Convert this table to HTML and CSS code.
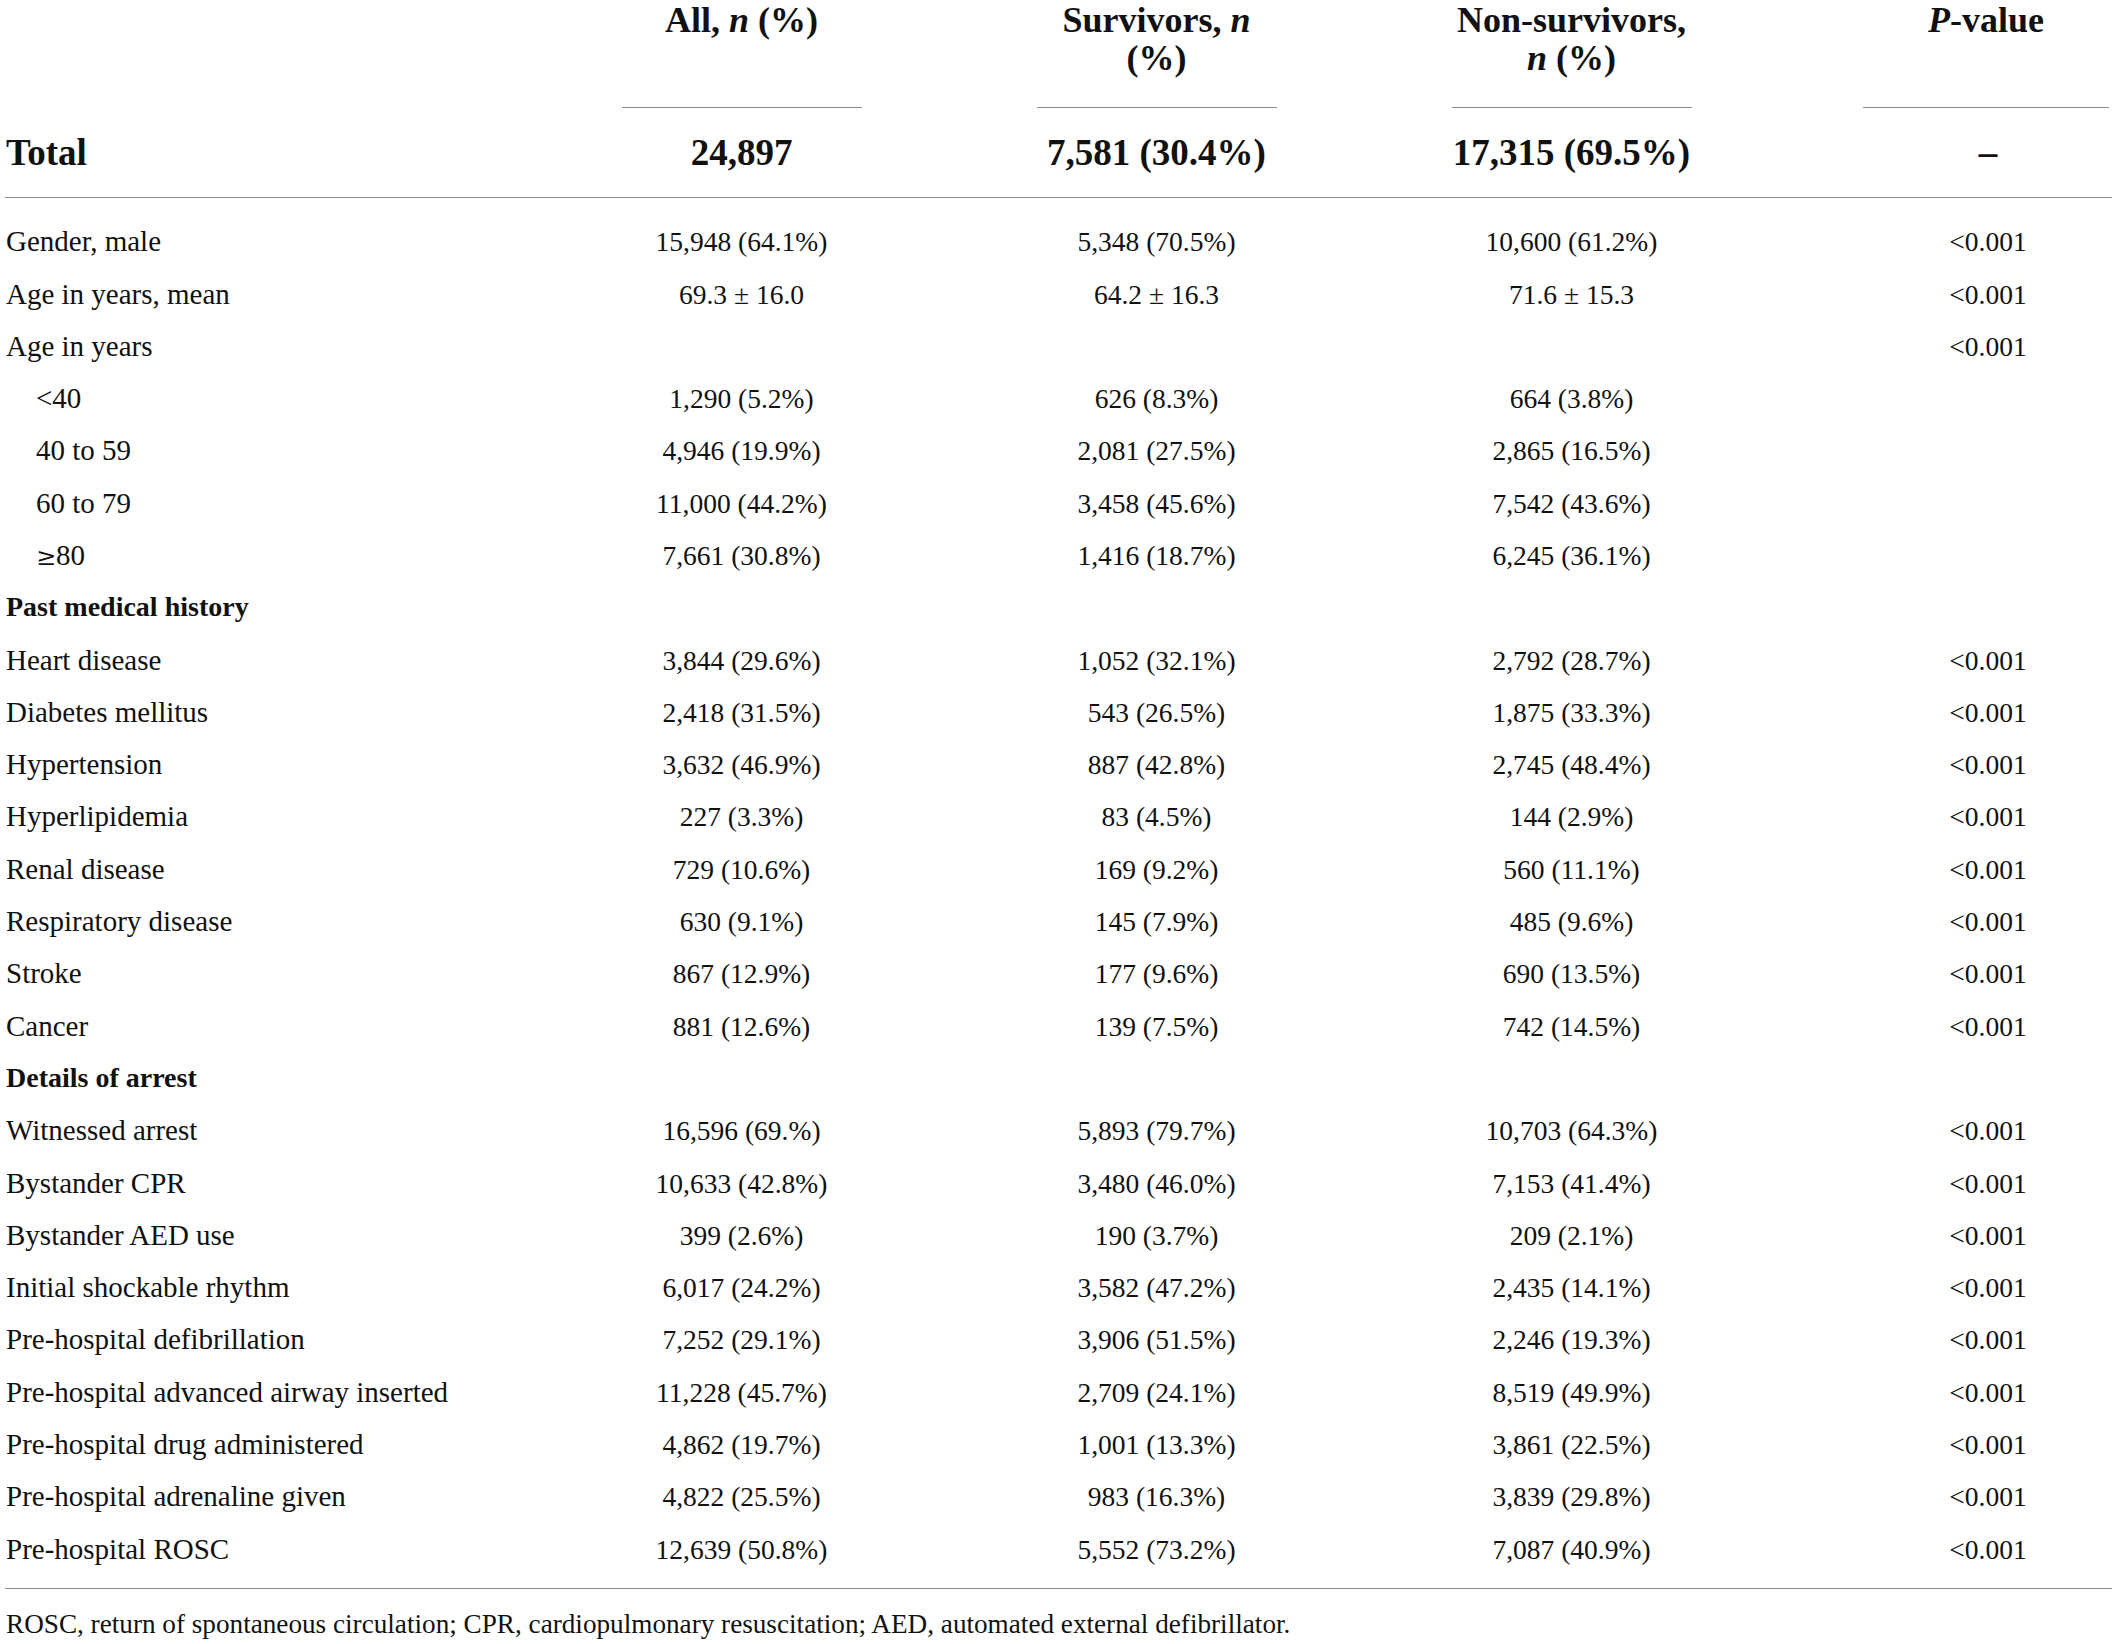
FILE: index.html
```html
<!DOCTYPE html>
<html lang="en">
<head>
<meta charset="utf-8">
<title>Characteristics table</title>
<link rel="stylesheet" href="styles.css">
</head>
<body>
<table class="tbl">
  <colgroup>
    <col class="c-label">
    <col class="c-data">
    <col class="c-data">
    <col class="c-data">
    <col class="c-p">
  </colgroup>
  <thead>
    <tr class="head">
      <th class="lab"></th>
      <th><div class="hd">All, <i>n</i> (%)</div></th>
      <th><div class="hd">Survivors, <i>n</i><br>(%)</div></th>
      <th><div class="hd">Non-survivors,<br><i>n</i> (%)</div></th>
      <th class="pcol"><div class="hd hd-p"><i>P</i>-value</div></th>
    </tr>
    <tr class="total">
      <th class="lab">Total</th>
      <th>24,897</th>
      <th>7,581 (30.4%)</th>
      <th>17,315 (69.5%)</th>
      <th class="pcol">–</th>
    </tr>
  </thead>
  <tbody>
    <tr class="first"><td class="lab">Gender, male</td><td>15,948 (64.1%)</td><td>5,348 (70.5%)</td><td>10,600 (61.2%)</td><td class="pcol">&lt;0.001</td></tr>
    <tr><td class="lab">Age in years, mean</td><td>69.3 ± 16.0</td><td>64.2 ± 16.3</td><td>71.6 ± 15.3</td><td class="pcol">&lt;0.001</td></tr>
    <tr><td class="lab">Age in years</td><td></td><td></td><td></td><td class="pcol">&lt;0.001</td></tr>
    <tr><td class="lab ind">&lt;40</td><td>1,290 (5.2%)</td><td>626 (8.3%)</td><td>664 (3.8%)</td><td class="pcol"></td></tr>
    <tr><td class="lab ind">40 to 59</td><td>4,946 (19.9%)</td><td>2,081 (27.5%)</td><td>2,865 (16.5%)</td><td class="pcol"></td></tr>
    <tr><td class="lab ind">60 to 79</td><td>11,000 (44.2%)</td><td>3,458 (45.6%)</td><td>7,542 (43.6%)</td><td class="pcol"></td></tr>
    <tr><td class="lab ind"><span class="ge">≥</span>80</td><td>7,661 (30.8%)</td><td>1,416 (18.7%)</td><td>6,245 (36.1%)</td><td class="pcol"></td></tr>
    <tr><td class="lab sec">Past medical history</td><td></td><td></td><td></td><td class="pcol"></td></tr>
    <tr><td class="lab">Heart disease</td><td>3,844 (29.6%)</td><td>1,052 (32.1%)</td><td>2,792 (28.7%)</td><td class="pcol">&lt;0.001</td></tr>
    <tr><td class="lab">Diabetes mellitus</td><td>2,418 (31.5%)</td><td>543 (26.5%)</td><td>1,875 (33.3%)</td><td class="pcol">&lt;0.001</td></tr>
    <tr><td class="lab">Hypertension</td><td>3,632 (46.9%)</td><td>887 (42.8%)</td><td>2,745 (48.4%)</td><td class="pcol">&lt;0.001</td></tr>
    <tr><td class="lab">Hyperlipidemia</td><td>227 (3.3%)</td><td>83 (4.5%)</td><td>144 (2.9%)</td><td class="pcol">&lt;0.001</td></tr>
    <tr><td class="lab">Renal disease</td><td>729 (10.6%)</td><td>169 (9.2%)</td><td>560 (11.1%)</td><td class="pcol">&lt;0.001</td></tr>
    <tr><td class="lab">Respiratory disease</td><td>630 (9.1%)</td><td>145 (7.9%)</td><td>485 (9.6%)</td><td class="pcol">&lt;0.001</td></tr>
    <tr><td class="lab">Stroke</td><td>867 (12.9%)</td><td>177 (9.6%)</td><td>690 (13.5%)</td><td class="pcol">&lt;0.001</td></tr>
    <tr><td class="lab">Cancer</td><td>881 (12.6%)</td><td>139 (7.5%)</td><td>742 (14.5%)</td><td class="pcol">&lt;0.001</td></tr>
    <tr><td class="lab sec">Details of arrest</td><td></td><td></td><td></td><td class="pcol"></td></tr>
    <tr><td class="lab">Witnessed arrest</td><td>16,596 (69.%)</td><td>5,893 (79.7%)</td><td>10,703 (64.3%)</td><td class="pcol">&lt;0.001</td></tr>
    <tr><td class="lab">Bystander CPR</td><td>10,633 (42.8%)</td><td>3,480 (46.0%)</td><td>7,153 (41.4%)</td><td class="pcol">&lt;0.001</td></tr>
    <tr><td class="lab">Bystander AED use</td><td>399 (2.6%)</td><td>190 (3.7%)</td><td>209 (2.1%)</td><td class="pcol">&lt;0.001</td></tr>
    <tr><td class="lab">Initial shockable rhythm</td><td>6,017 (24.2%)</td><td>3,582 (47.2%)</td><td>2,435 (14.1%)</td><td class="pcol">&lt;0.001</td></tr>
    <tr><td class="lab">Pre-hospital defibrillation</td><td>7,252 (29.1%)</td><td>3,906 (51.5%)</td><td>2,246 (19.3%)</td><td class="pcol">&lt;0.001</td></tr>
    <tr><td class="lab">Pre-hospital advanced airway inserted</td><td>11,228 (45.7%)</td><td>2,709 (24.1%)</td><td>8,519 (49.9%)</td><td class="pcol">&lt;0.001</td></tr>
    <tr><td class="lab">Pre-hospital drug administered</td><td>4,862 (19.7%)</td><td>1,001 (13.3%)</td><td>3,861 (22.5%)</td><td class="pcol">&lt;0.001</td></tr>
    <tr><td class="lab">Pre-hospital adrenaline given</td><td>4,822 (25.5%)</td><td>983 (16.3%)</td><td>3,839 (29.8%)</td><td class="pcol">&lt;0.001</td></tr>
    <tr class="last"><td class="lab">Pre-hospital ROSC</td><td>12,639 (50.8%)</td><td>5,552 (73.2%)</td><td>7,087 (40.9%)</td><td class="pcol">&lt;0.001</td></tr>
  </tbody>
</table>
<p class="note">ROSC, return of spontaneous circulation; CPR, cardiopulmonary resuscitation; AED, automated external defibrillator.</p>
</body>
</html>
```

FILE: styles.css
```css
html, body {
  margin: 0;
  padding: 0;
  background: #ffffff;
}

body {
  font-family: "Liberation Serif", "Times New Roman", serif;
  color: #111111;
}

.tbl {
  margin-left: 5px;
  width: 2107px;
  table-layout: fixed;
  border-collapse: separate;
  border-spacing: 0;
}

.c-label { width: 529px; }
.c-data { width: 415px; }
.c-p { width: 333px; }

.tbl th,
.tbl td {
  padding: 0;
  text-align: center;
  vertical-align: baseline;
}

.tbl .pcol {
  padding-left: 85px;
}

.tbl .lab {
  text-align: left;
  padding-left: 1px;
}

/* header row */
.head th {
  font-size: 36px;
  line-height: 38px;
  font-weight: 700;
  vertical-align: top;
  padding-top: 1px;
}

.hd {
  width: 240px;
  height: 76px;
  margin: 0 auto;
  padding-bottom: 30px;
  border-bottom: 1px solid #8c8c8c;
}

.hd-p {
  width: 246px;
  margin: 0 0 0 -1px;
}

/* total row */
.total th {
  font-size: 37px;
  line-height: 37px;
  font-weight: 700;
  padding-top: 26px;
  padding-bottom: 26px;
  border-bottom: 1px solid #8c8c8c;
}

.total .pcol {
  padding-left: 85px;
}

/* body rows */
.tbl tbody tr {
  height: 52.3px;
}

.tbl tbody td {
  font-size: 27.5px;
  line-height: 1;
  padding-top: 12px;
}

.tbl tbody td.lab {
  font-size: 29px;
}

.tbl tbody td.ind {
  padding-left: 31px;
}

.tbl tbody td.sec {
  font-weight: 700;
  font-size: 28px;
}

.ge {
  font-family: "DejaVu Serif", serif;
  font-size: 24px;
}

.tbl tbody tr.first {
  height: 69.5px;
}

.tbl tbody tr.first td {
  padding-top: 29.2px;
}

.tbl tbody tr.last {
  height: 66.8px;
}

.tbl tbody tr.last td {
  border-bottom: 1px solid #8c8c8c;
}

.note {
  margin: 22px 0 0 6px;
  font-size: 27.2px;
  line-height: 1;
}
```
